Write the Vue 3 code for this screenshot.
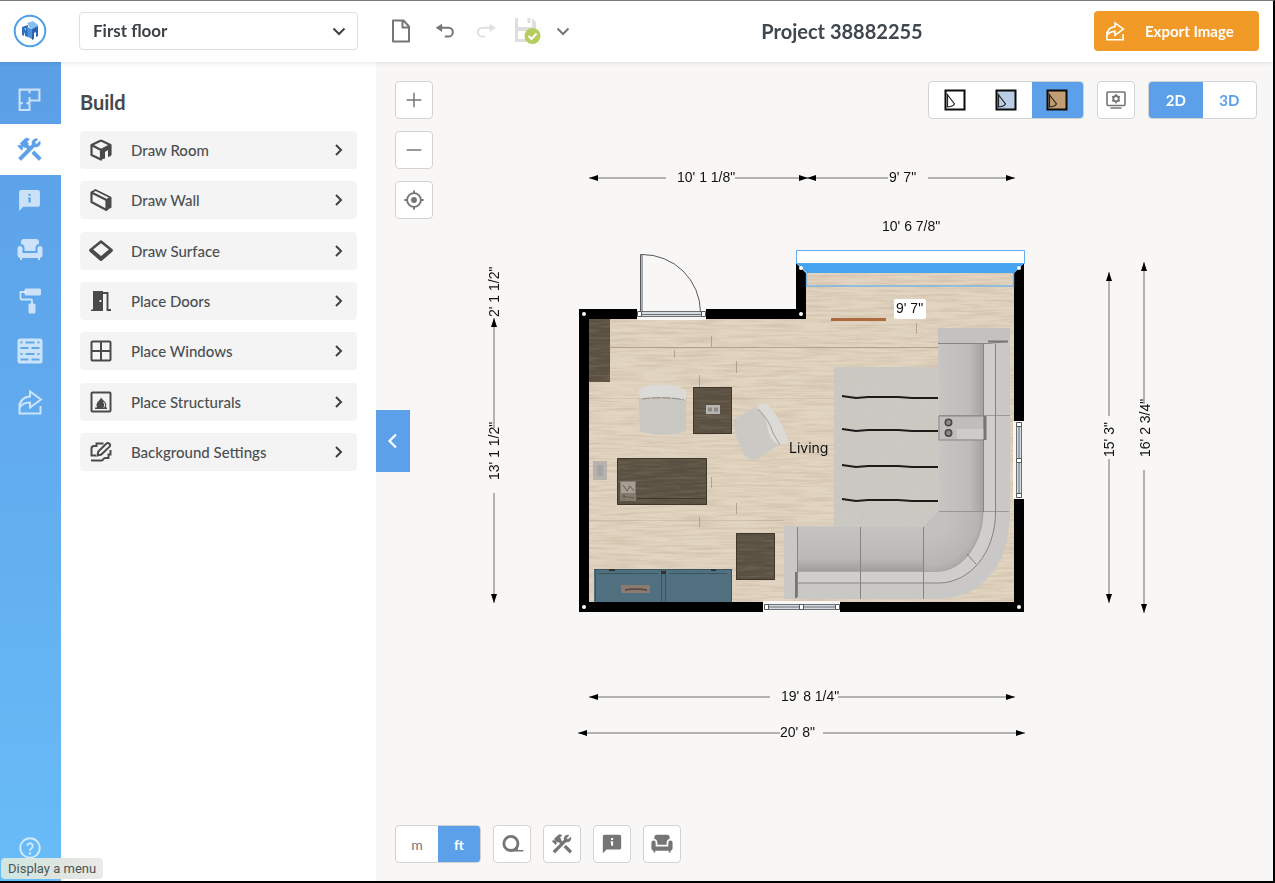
<script setup>
import { ref } from 'vue'

const floor = ref('First floor')
const activeTool = ref('build')
const activeStyle = ref('textured')
const activeView = ref('2D')
const activeUnit = ref('ft')

const rail = [
  { id: 'floorplan', icon: 'plan', label: 'Floor plan' },
  { id: 'build', icon: 'tools', label: 'Build' },
  { id: 'info', icon: 'info', label: 'Info' },
  { id: 'furnish', icon: 'chair', label: 'Furnish' },
  { id: 'decorate', icon: 'roller', label: 'Decorate' },
  { id: 'materials', icon: 'bricks', label: 'Materials' },
  { id: 'share', icon: 'share', label: 'Share' }
]

const buildItems = [
  { icon: 'room', label: 'Draw Room' },
  { icon: 'wall', label: 'Draw Wall' },
  { icon: 'surface', label: 'Draw Surface' },
  { icon: 'door', label: 'Place Doors' },
  { icon: 'window', label: 'Place Windows' },
  { icon: 'fireplace', label: 'Place Structurals' },
  { icon: 'background', label: 'Background Settings' }
]

const zoomTools = [
  { icon: 'plus', label: 'Zoom in' },
  { icon: 'minus', label: 'Zoom out' },
  { icon: 'target', label: 'Center plan' }
]

const planStyles = [
  { id: 'outline', fill: '#ffffff', label: 'Outline' },
  { id: 'tinted', fill: '#b9cde6', label: 'Tinted' },
  { id: 'textured', fill: '#c39d72', label: 'Textured' }
]

const toggles = [
  { icon: 'tape', label: 'Dimensions' },
  { icon: 'tools', label: 'Show structure' },
  { icon: 'info', label: 'Show labels' },
  { icon: 'chair', label: 'Show furniture' }
]

const dimLines = [
  [666, 178, 589, 178],
  [735, 178, 808, 178],
  [888, 178, 807, 178],
  [928, 178, 1015, 178],
  [494, 428, 494, 318],
  [494, 493, 494, 603],
  [1109, 416, 1109, 272],
  [1109, 459, 1109, 603],
  [1144, 404, 1144, 262],
  [1144, 470, 1144, 613],
  [770, 697, 589, 697],
  [838, 697, 1015, 697],
  [780, 733, 578, 733],
  [823, 733, 1025, 733]
]

const dimLabels = [
  { x: 677, y: 182, text: '10\' 1 1/8"' },
  { x: 889, y: 182, text: '9\' 7"' },
  { x: 882, y: 231, text: '10\' 6 7/8"' },
  { x: 781, y: 701, text: '19\' 8 1/4"' },
  { x: 780, y: 737, text: '20\' 8"' },
  { x: 499, y: 317, text: '2\' 1 1/2"', turned: true },
  { x: 499, y: 480, text: '13\' 1 1/2"', turned: true },
  { x: 1114, y: 457, text: '15\' 3"', turned: true },
  { x: 1150, y: 457, text: '16\' 2 3/4"', turned: true }
]

const corners = [[584, 314], [801, 314], [801, 268], [1019, 268], [1019, 607], [584, 607]]
const rugStripes = [397, 430, 466, 500]
</script>

<template>
  <svg class="sprite" aria-hidden="true">
    <symbol id="plan" viewBox="0 0 24 24">
      <path d="M2.500 2.500h19v10.500h-9.500v9H2.500zM12 2.500v3.500M12 9.500v3.500M2.500 15.500h3M9 15.500h3" fill="none" stroke="currentColor" stroke-width="2" />
    </symbol>
    <symbol id="tools" viewBox="0 0 24 24">
      <path d="M13.783 15.172l2.121-2.121 5.996 5.996-2.121 2.121zM17.500 10c1.930 0 3.500-1.570 3.500-3.500 0-.580-.160-1.120-.410-1.600l-2.700 2.700-1.490-1.490 2.700-2.700c-.480-.250-1.020-.410-1.600-.410C15.570 3 14 4.570 14 6.500c0 .410.080.800.210 1.160l-1.850 1.850-1.780-1.780.710-.710-1.410-1.410L12 3.490a3 3 0 0 0-4.240 0L4.220 7.030l1.410 1.410H2.810l-.710.710 3.540 3.540.710-.710V9.150l1.410 1.410.710-.710 1.780 1.780-7.410 7.410 2.120 2.120L16.340 9.790c.360.130.750.210 1.160.210z" fill="currentColor" stroke="currentColor" stroke-width="0.400" />
    </symbol>
    <symbol id="info" viewBox="0 0 24 24">
      <path fill-rule="evenodd" d="M20 2H4c-1.100 0-2 .900-2 2v18l4-4h14c1.100 0 2-.900 2-2V4c0-1.100-.900-2-2-2zM11 5.500h2.200v2H11zM10.500 9h2.700v5h-2.200v-3.500h-.500z" fill="currentColor" />
    </symbol>
    <symbol id="chair" viewBox="0 0 26 26">
      <path d="M7 2h12a3 3 0 0 1 3 3v2c-2 0-3.500 2-3.500 4v3h-11v-3c0-2-1.500-4-3.500-4V5a3 3 0 0 1 3-3zM3 9c1.500 0 2.500 1 2.500 2.500V16h15v-4.500a2.500 2.500 0 0 1 5 0V18a3 3 0 0 1-2.500 3v2h-2v-2H5v2H3v-2a3 3 0 0 1-2.500-3v-6.500A2.500 2.500 0 0 1 3 9z" fill="currentColor" />
    </symbol>
    <symbol id="roller" viewBox="0 0 26 26">
      <path d="M9 4H3.500v6.500a1 1 0 0 0 1 1H14a1 1 0 0 1 1 1V16" fill="none" stroke="currentColor" stroke-width="1.800" />
      <rect x="7.500" y="0.500" width="16.500" height="7" rx="1.500" fill="currentColor" />
      <rect x="11.500" y="15.500" width="7" height="10" rx="1.500" fill="currentColor" />
    </symbol>
    <symbol id="bricks" viewBox="0 0 26 26">
      <rect x="0.500" y="0.500" width="25" height="25" rx="2.500" fill="currentColor" />
      <path d="M3.500 4.500h2M8.500 4.500h9M20.500 4.500h2M3.500 10h8M14.500 10h8M3.500 16h2M8.500 16h9M20.500 16h2M3.500 21.500h8M14.500 21.500h8" stroke="#60a9ec" stroke-width="2" />
    </symbol>
    <symbol id="share" viewBox="0 0 26 26">
      <path d="M13 7.500V2.500l11 8-11 8v-5C8 13.500 4.500 15 2.500 19 2.500 12 6 8 13 7.500zM2.500 14v10.500h21V17" fill="none" stroke="currentColor" stroke-width="2" />
    </symbol>
    <symbol id="help" viewBox="0 0 24 24">
      <circle cx="12" cy="12" r="9" fill="none" stroke="currentColor" stroke-width="1.800" />
      <path d="M9.500 10a2.500 2.500 0 1 1 4 2.200c-1 .700-1.500 1.100-1.500 2.300" fill="none" stroke="currentColor" stroke-width="1.800" />
      <circle cx="12" cy="17" r="1.100" fill="currentColor" />
    </symbol>
    <symbol id="room" viewBox="0 0 24 24">
      <path d="M12 2.500L2.500 7v10l9.500 4.500V12L2.500 7M12 12l9.500-5L12 2.500M21.500 7v10" fill="none" stroke="currentColor" stroke-width="2.200" stroke-linejoin="round" />
      <path d="M12 12l10-5v11l-3 1v-7l-3 2v6.500L12 21.500z" fill="currentColor" />
    </symbol>
    <symbol id="wall" viewBox="0 0 24 24">
      <path d="M2.500 4.500l15 7.500v10L2.500 14z" fill="none" stroke="currentColor" stroke-width="2.200" stroke-linejoin="round" />
      <path d="M2.500 4.500L6.500 2l15 7.500-4 2.500" fill="none" stroke="currentColor" stroke-width="1.800" stroke-linejoin="round" />
      <path d="M17.500 12l5-2.500v10L17.500 22.500z" fill="currentColor" />
    </symbol>
    <symbol id="surface" viewBox="0 0 26 26">
      <path fill-rule="evenodd" d="M12.200 1.500q.800-.500 1.600 0L25.500 11q.800 1 0 2.500L14 23.500q-1 .800-2 0L.500 13.500q-.800-1.500 0-2.500zM13 4.500L4.500 11.500 13 18.500l8.500-7z" fill="currentColor" />
    </symbol>
    <symbol id="door" viewBox="0 0 24 24">
      <path fill-rule="evenodd" d="M4 2h10v20H2v-1.500h2zM10.500 11v2h1.800v-2z" fill="currentColor" />
      <path d="M14 4h4.500v17H22" fill="none" stroke="currentColor" stroke-width="1.900" />
    </symbol>
    <symbol id="window" viewBox="0 0 24 24">
      <path d="M3.500 2.500h17a1 1 0 0 1 1 1v17a1 1 0 0 1-1 1h-17a1 1 0 0 1-1-1v-17a1 1 0 0 1 1-1zM12 2.500v19M2.500 12h19" fill="none" stroke="currentColor" stroke-width="2" />
    </symbol>
    <symbol id="fireplace" viewBox="0 0 24 24">
      <rect x="2.500" y="2.500" width="19" height="19" rx="1" fill="none" stroke="currentColor" stroke-width="2" />
      <path d="M6 19h12v-1.500h-1c1-4-1-6-2.500-7L12 7.500c-.500 2.500-4.500 4-4.500 8l.500 2H6z" fill="currentColor" />
      <path d="M14.500 12c1.500 2 1.500 4 .300 5.500" fill="none" stroke="#f3f3f3" stroke-width="1" />
    </symbol>
    <symbol id="background" viewBox="0 0 24 24">
      <path d="M14.500 3.500H7.500v2.500H5a2.500 2.500 0 0 0-2.500 2.500V15.500H7M2 20.500h11c1 0 1.500-2.500 3-2.500h3.500v-3.500H21.500V10" fill="none" stroke="currentColor" stroke-width="2" />
      <path d="M8.500 15.500l.800-4 8.200-8a1.800 1.800 0 0 1 2.600 0l.500.500a1.800 1.800 0 0 1 0 2.600L12.300 14.500z" fill="none" stroke="currentColor" stroke-width="2" />
    </symbol>
    <symbol id="right" viewBox="0 0 16 16">
      <path d="M5 3l5 5-5 5" fill="none" stroke="currentColor" stroke-width="2" />
    </symbol>
    <symbol id="down" viewBox="0 0 16 16">
      <path d="M2.500 5.500L8 11l5.500-5.500" fill="none" stroke="currentColor" stroke-width="2" />
    </symbol>
    <symbol id="file" viewBox="0 0 24 24">
      <path d="M4 1.500h10.500l5.500 6v15H4zM13.500 2v6.500H20" fill="none" stroke="currentColor" stroke-width="2" stroke-linejoin="round" />
    </symbol>
    <symbol id="undo" viewBox="0 0 24 24">
      <path d="M9 8.500h9a4.700 4.700 0 0 1 0 9.500h-4" fill="none" stroke="currentColor" stroke-width="2.200" />
      <path d="M4 8.500L11 4v9z" fill="currentColor" />
    </symbol>
    <symbol id="redo" viewBox="0 0 24 24">
      <path d="M18 8.500H9A4.700 4.700 0 0 0 9 18h3" fill="none" stroke="currentColor" stroke-width="2.200" />
      <path d="M24 8.500L17 4v9z" fill="currentColor" />
    </symbol>
    <symbol id="saved" viewBox="0 0 28 28">
      <path fill-rule="evenodd" d="M2 1h3v9h14V1l4 4v20H2zM5 14v8h16v-8zM14.500 1h3v5h-3z" fill="#dedede" />
      <circle cx="19.500" cy="19" r="8" fill="#b5cc5e" />
      <path d="M15.500 19l3 3 5-5.500" fill="none" stroke="#fff" stroke-width="2" />
    </symbol>
    <symbol id="plus" viewBox="0 0 24 24">
      <path d="M12 4v16M4 12h16" stroke="currentColor" stroke-width="1.600" />
    </symbol>
    <symbol id="minus" viewBox="0 0 24 24">
      <path d="M4 12h16" stroke="currentColor" stroke-width="1.600" />
    </symbol>
    <symbol id="target" viewBox="0 0 24 24">
      <circle cx="12" cy="12" r="7.500" fill="none" stroke="currentColor" stroke-width="2" />
      <circle cx="12" cy="12" r="3.200" fill="currentColor" />
      <path d="M12 1.500v4M12 18.500v4M1.500 12h4M18.500 12h4" stroke="currentColor" stroke-width="2" />
    </symbol>
    <symbol id="display" viewBox="0 0 24 24">
      <rect x="3" y="4" width="18" height="13.500" rx="1" fill="none" stroke="currentColor" stroke-width="1.600" />
      <circle cx="12" cy="10.700" r="2.700" fill="none" stroke="currentColor" stroke-width="1.900" />
      <path d="M12 6v2M12 13.500v2M8 8.300l1.700 1M14.300 12l1.700 1.100M8 13.100l1.700-1.100M14.300 9.300l1.700-1M6.500 20h11" stroke="currentColor" stroke-width="1.500" />
    </symbol>
    <symbol id="tape" viewBox="0 0 24 24">
      <circle cx="11" cy="11.500" r="6.500" fill="none" stroke="currentColor" stroke-width="2.600" />
      <path d="M11 17h5l1.500-4v4.500h5v1.500H11z" fill="currentColor" />
    </symbol>
  </svg>

  <div class="app">
    <header class="topbar">
      <a class="logo" href="#" aria-label="Home">
        <svg viewBox="0 0 34 34">
          <circle cx="17" cy="17" r="15.300" fill="#fff" stroke="#4fa0e6" stroke-width="2" />
          <path d="M9 13l6-2v12l-3-1v-4l-1.500 4L9 21z" fill="#2f6fc0" />
          <path d="M14 9l6-2 5 4-1 5-7-2z" fill="#86bff0" />
          <path d="M14 13l5 2v10l-4-2z" fill="#4b93dd" />
          <path d="M19 15l6-3v10l-2 1v-5l-2 1v6l-2 1z" fill="#2866b4" />
          <path d="M11 14.500l2-.500v3z" fill="#8fc4f2" />
        </svg>
      </a>
      <label class="floor-picker">
        <select v-model="floor" aria-label="Floor">
          <option>First floor</option>
        </select>
        <svg><use href="#down" /></svg>
      </label>
      <nav class="file-tools">
        <button class="plain" aria-label="New"><svg class="s24"><use href="#file" /></svg></button>
        <button class="plain" aria-label="Undo"><svg class="s22"><use href="#undo" /></svg></button>
        <button class="plain faded" aria-label="Redo"><svg class="s22"><use href="#redo" /></svg></button>
        <button class="plain" aria-label="Saved"><svg class="s28"><use href="#saved" /></svg></button>
        <button class="plain small" aria-label="Save options"><svg class="s16"><use href="#down" /></svg></button>
      </nav>
      <h1>Project 38882255</h1>
      <button class="export"><svg><use href="#share" /></svg>Export Image</button>
    </header>

    <div class="workspace">
      <nav class="rail">
        <div class="rail-items">
          <button v-for="r in rail" :key="r.id" :class="{ active: activeTool === r.id }" :aria-label="r.label" @click="activeTool = r.id">
            <svg :class="r.icon"><use :href="'#' + r.icon" /></svg>
          </button>
        </div>
        <button class="help" aria-label="Help"><svg><use href="#help" /></svg></button>
      </nav>

      <aside class="panel">
        <h2>Build</h2>
        <div class="menu">
          <button v-for="b in buildItems" :key="b.label">
            <svg class="lead"><use :href="'#' + b.icon" /></svg>
            <span>{{ b.label }}</span>
            <svg class="go"><use href="#right" /></svg>
          </button>
        </div>
      </aside>

      <main class="canvas">
        <svg class="drawing" viewBox="376 62 897 819" role="img" aria-label="Floor plan">
          <defs>
            <marker id="arrow" viewBox="0 0 10 6" refX="9" refY="3" markerWidth="10" markerHeight="6" markerUnits="userSpaceOnUse" orient="auto">
              <path d="M0 0l9 3-9 3z" fill="#000" />
            </marker>
            <filter id="grain" x="0" y="0" width="1" height="1">
              <feTurbulence type="fractalNoise" baseFrequency="0.025 0.400" numOctaves="3" seed="4" />
              <feColorMatrix values="0 0 0 0 0.620  0 0 0 0 0.520  0 0 0 0 0.400  1.800 0 0 0 -0.680" />
              <feComposite in2="SourceGraphic" operator="in" />
            </filter>
            <filter id="dark-grain" x="0" y="0" width="1" height="1">
              <feTurbulence type="fractalNoise" baseFrequency="0.030 0.400" numOctaves="3" seed="9" />
              <feColorMatrix values="0 0 0 0 0.180  0 0 0 0 0.150  0 0 0 0 0.100  1.500 0 0 0 -0.620" />
              <feComposite in2="SourceGraphic" operator="in" />
            </filter>
            <filter id="rug-grain" x="0" y="0" width="1" height="1">
              <feTurbulence type="fractalNoise" baseFrequency="0.400" numOctaves="2" seed="2" />
              <feColorMatrix values="0 0 0 0 0.550  0 0 0 0 0.540  0 0 0 0 0.520  1.200 0 0 0 -0.500" />
              <feComposite in2="SourceGraphic" operator="in" />
            </filter>
            <linearGradient id="seat-v" x1="0" x2="1" y1="0" y2="0">
              <stop offset="0" stop-color="#c6c5c2" /><stop offset=".7" stop-color="#bdbcba" /><stop offset="1" stop-color="#a3a2a0" />
            </linearGradient>
            <linearGradient id="seat-h" x1="0" x2="0" y1="0" y2="1">
              <stop offset="0" stop-color="#c4c3c0" /><stop offset=".7" stop-color="#bbbab8" /><stop offset="1" stop-color="#a09f9d" />
            </linearGradient>
            <radialGradient id="seat-corner" cx="0.1" cy="0.1" r="1">
              <stop offset=".3" stop-color="#c2c1bf" /><stop offset=".8" stop-color="#b7b6b4" /><stop offset="1" stop-color="#a3a2a0" />
            </radialGradient>
          </defs>

          <path d="M589 319H806V272H1014V602H589z" fill="#e1d4c0" />
          <path d="M589 319H806V272H1014V602H589z" fill="#fff" filter="url(#grain)" />
          <g stroke="#8f7f6b" stroke-width="1" opacity=".55">
            <path d="M610 347.500H938" />
            <path d="M589 398.500H834M589 520.500H784" opacity=".3" />
            <path d="M711.500 336v11M736.500 361v12M699.500 375v12M916.500 323v11M711.500 477v11M736.500 503v11M699.500 517v10M674.500 350v8" />
          </g>

          <rect x="834" y="367" width="110" height="160" fill="#cbc9c2" />
          <rect x="834" y="367" width="110" height="160" fill="#fff" filter="url(#rug-grain)" />
          <path v-for="y in rugStripes" :key="y" :d="`M842 ${y - 1}l14 2 12-1 18 0 12 0 14 1 12 0 14 0`" fill="none" stroke="#1d1b1a" stroke-width="2" />

          <path d="M938 328H1010V512C1010 565 982 599 936 599H784V526H918L938 509z" fill="#c9c8c6" />
          <path d="M938 328h72v13h-20l-20 2h-32z" fill="#c3c2c0" />
          <path d="M939 343.500h44v72h-44z" fill="url(#seat-v)" />
          <path d="M939 440h44v71h-44z" fill="url(#seat-v)" />
          <path d="M939 511h44c0 30-18 60-44 60h-16v-44l16-16z" fill="url(#seat-corner)" />
          <path d="M798 527h62v44h-62zM860 527h63v44h-63z" fill="url(#seat-h)" />
          <path d="M797 571h140c26 0 46-28 46-60V343h12v168c0 42-26 72-56 72H797z" fill="#cfcecc" />
          <g fill="none" stroke="#858482" stroke-width="1">
            <path d="M938 343.500h50l20-2M983.500 344v168M995.500 344v168c0 40-25 71-57 71H797" />
            <path d="M939 415.500h71M939 511.500h70" opacity=".7" />
            <path d="M860.500 527v44M923.500 527v72M967 554l9 10M797.500 527v70M860.500 571v28" />
            <path d="M797 571.500h140c26 0 46-30 46-60" opacity=".5" />
          </g>
          <path d="M796 572v26M988 341.500h20" stroke="#777674" stroke-width="2" />
          <path d="M939 416h45v24h-45z" fill="#bfbebc" stroke="#858482" />
          <path d="M957 429h27v10h-27z" fill="#cdccca" />
          <path d="M985 416v24" stroke="#777674" stroke-width="3" />
          <circle cx="948.500" cy="422.500" r="3.200" fill="#8a8988" stroke="#454443" stroke-width="1.500" />
          <circle cx="948.500" cy="433" r="3.200" fill="#8a8988" stroke="#454443" stroke-width="1.500" />

          <path d="M831 319.500h55" stroke="#ab6a3f" stroke-width="3" />

          <g fill="#5a5042">
            <path d="M589 319h21v63h-21zM693 387h39v47h-39zM617 458h90v47h-90zM736 533h39v47h-39z" />
            <path d="M589 319h21v63h-21zM693 387h39v47h-39zM617 458h90v47h-90zM736 533h39v47h-39z" filter="url(#dark-grain)" />
          </g>
          <g fill="none" stroke="#40372c">
            <path d="M693.500 387.500h38v46h-38zM617.500 458.500h89v46h-89zM736.500 533.500h38v46h-38zM637 498.500h68" />
          </g>
          <path d="M706 405h14v9h-14z" fill="#b8b6b3" />
          <path d="M708 407.500h4v4h-4zM714 407.500h4v4h-4z" fill="#8b8987" />
          <path d="M620 481h16v20h-16z" fill="#857a6e" />
          <path d="M621 482h14v11h-14z" fill="#a79e93" />
          <path d="M623 485l4 6 3-5 4 5M622 496l12 2M624 494v6" fill="none" stroke="#655b50" />
          <path d="M593 461h14v19h-14z" fill="#b7b3ac" />
          <path d="M597 465h6v11h-6z" fill="#a3a5a6" />

          <path d="M639 399h47q1 2 0 4v28c-14 5-32 5-46 0z" fill="#c9c7c2" />
          <path d="M639 389c14-6 34-6 47 1q1 5-1 10c-12-3-30-3-43-1q-4-4-3-10z" fill="#dcdad6" />
          <path d="M642 399c12-2 30-2 42 1" fill="none" stroke="#8e8a84" stroke-dasharray="9 1" />
          <path d="M733 420l22-13 15 10 8 28-20 14q-8 2-14-4-8-14-11-35z" fill="#cbc9c4" />
          <path d="M757 406q7-6 13 1 12 14 18 33-3 7-9 5-10-4-12-20-2-10-10-19z" fill="#dcdad6" />
          <path d="M758 409q12 12 15 24l7 12" fill="none" stroke="#a19d97" />

          <path d="M594 569h138v33H594z" fill="#51707f" />
          <path d="M595.500 570v31M661.500 570v32M665.500 570v32M731.500 570v32M594 569.500h138M598 573.500h60M669 573.500h58" stroke="#3b5461" />
          <path d="M621 585h29v8h-29z" fill="#8c7a70" />
          <path d="M625 590q10-2 22 0" stroke="#4f4741" fill="none" stroke-width="1.500" />
          <path d="M609 569h6v2h-6zM661 571h5v3h-5zM711 569h5v2h-5z" fill="#35302b" />

          <path d="M579 309h227v10H589v283h425V319h10v293H579z" fill="#000" />
          <path d="M796 263l10 10v46h-10zM1024 263l-10 10v60h10z" fill="#000" />
          <path d="M796.500 250.500h228v13h-228z" fill="#fff" stroke="#63aeef" />
          <path d="M797 263.500h227l-10 9.500H807z" fill="#45a3ef" />
          <path d="M806.500 273v13h207v-13" fill="none" stroke="#63aeef" stroke-width="1.500" opacity=".8" />

          <path d="M637 308h69v12h-69zM763 601h77v12h-77zM1013 421h12v78h-12z" fill="#f8f7f6" />
          <g fill="#d6dbe2" stroke="#6c6f73">
            <path d="M641.500 311.500h60v5h-60zM768.500 604.500h67v5h-67zM1016.500 426.500h5v67h-5z" />
            <path d="M642 314.500h59M768 607h67M1019 427v67" fill="none" />
          </g>
          <g fill="#fff" stroke="#55585c">
            <path d="M637.500 311.500h4v5h-4zM701.500 311.500h4v5h-4zM764.500 604.500h4v5h-4zM835.500 604.500h4v5h-4zM799.500 604.500h4v5h-4zM1016.500 422.500h5v4h-5zM1016.500 493.500h5v4h-5zM1016.500 458.500h5v4h-5z" />
            <path d="M640.500 254.500h1.500v57h-1.500z" />
            <path d="M642 254.500A58 58 0 0 1 700.500 312" fill="none" />
          </g>
          <circle v-for="c in corners" :key="c.join()" :cx="c[0]" :cy="c[1]" r="2" fill="#fff" />

          <path v-for="(l, i) in dimLines" :key="i" :d="`M${l[0]} ${l[1]}L${l[2]} ${l[3]}`" class="dim" marker-end="url(#arrow)" />
          <text v-for="t in dimLabels" :key="t.text + t.x" :x="t.x" :y="t.y" :transform="t.turned ? `rotate(-90 ${t.x} ${t.y})` : null">{{ t.text }}</text>
          <rect x="894" y="299" width="32" height="20" rx="2" fill="#fff" />
          <text x="896" y="313">9' 7"</text>
          <text x="789" y="453" class="room-name">Living</text>
        </svg>

        <div class="controls top">
          <div class="zoom">
            <button v-for="z in zoomTools" :key="z.label" class="tile" :aria-label="z.label"><svg class="s22"><use :href="'#' + z.icon" /></svg></button>
          </div>
          <div class="modes">
            <div class="group styles">
              <button v-for="s in planStyles" :key="s.id" :class="{ active: activeStyle === s.id }" :aria-label="s.label" @click="activeStyle = s.id">
                <svg viewBox="0 0 22 22" class="s22">
                  <rect x="1.500" y="1.500" width="19" height="19" :fill="s.fill" stroke="#0b0b0b" stroke-width="2" />
                  <path d="M2.500 4.500l8 10.500q-2 3-8 3M3.500 5v13" fill="none" stroke="#222" stroke-width="1.200" />
                </svg>
              </button>
            </div>
            <button class="tile" aria-label="Display settings"><svg class="s24"><use href="#display" /></svg></button>
            <div class="group views">
              <button v-for="v in ['2D', '3D']" :key="v" :class="{ active: activeView === v }" @click="activeView = v">{{ v }}</button>
            </div>
          </div>
        </div>

        <button class="collapse" aria-label="Collapse panel">
          <svg viewBox="0 0 16 16"><path d="M11 1.500L4.500 8l6.500 6.500" fill="none" stroke="#fff" stroke-width="2.200" /></svg>
        </button>

        <div class="controls bottom">
          <div class="group units">
            <button v-for="u in ['m', 'ft']" :key="u" :class="{ active: activeUnit === u }" @click="activeUnit = u">{{ u }}</button>
          </div>
          <button v-for="t in toggles" :key="t.label" class="tile" :aria-label="t.label"><svg :class="t.icon"><use :href="'#' + t.icon" /></svg></button>
        </div>
      </main>
    </div>
    <div class="tip" role="tooltip">Display a menu</div>
  </div>
</template>

<style>
html, body { background: #000; }
</style>

<style scoped>
.app {
  position: relative;
  box-sizing: border-box;
  height: 100vh;
  min-height: 640px;
  display: flex;
  flex-direction: column;
  border: solid #000;
  border-width: 1px 2px 2px 0;
  border-top-color: #7d7d7d;
  font-family: Lato, "Open Sans", sans-serif;
  color: #45494d;
  background: #fff;
}
.sprite { position: absolute; width: 0; height: 0; }
button { font: inherit; color: inherit; border: 0; padding: 0; background: none; cursor: pointer; display: flex; align-items: center; justify-content: center; }
svg { display: block; flex: none; }
.s16 { width: 16px; height: 16px; }
.s22 { width: 22px; height: 22px; }
.s24 { width: 24px; height: 24px; }
.s28 { width: 28px; height: 28px; }

.topbar { position: relative; z-index: 2; box-sizing: border-box; height: 61px; flex: none; display: flex; align-items: center; padding: 0 14px 2px 0; background: #fff; box-shadow: 0 1px 4px rgba(0, 0, 0, .1); }
.logo { width: 79px; flex: none; }
.logo svg { width: 34px; height: 34px; margin-left: 13px; }
.floor-picker { position: relative; width: 279px; }
.floor-picker select { box-sizing: border-box; width: 100%; height: 38px; padding: 0 13px; appearance: none; border: 1px solid #dfdfdf; border-radius: 4px; background: #fff; font: bold 17px Lato, sans-serif; color: #3d4246; }
.floor-picker svg { position: absolute; right: 11px; top: 11px; width: 16px; height: 16px; color: #3d4246; pointer-events: none; }
.file-tools { display: flex; align-items: center; margin-left: 22px; width: 210px; color: #767676; }
.plain { width: 42px; height: 40px; }
.plain.small { width: 30px; }
.plain.faded { color: #e0e0e0; }
h1 { flex: 1; margin: 0; text-align: center; font-size: 20px; line-height: 24px; white-space: nowrap; color: #3f474f; }
.export { width: 165px; height: 40px; justify-content: flex-start; gap: 20px; padding-left: 11px; border-radius: 4px; background: #f29a27; color: #fff; font-weight: bold; font-size: 15px; }
.export svg { width: 20px; height: 20px; }

.workspace { flex: 1; min-height: 0; display: flex; }
.rail { width: 61px; flex: none; display: flex; flex-direction: column; justify-content: space-between; padding: 12px 0 20px; box-sizing: border-box; background: linear-gradient(#5b9fe7, #61abee 45%, #68bcf7); color: rgba(255, 255, 255, .68); }
.rail-items { display: grid; grid-auto-rows: 1fr; height: 353px; }
.rail-items svg { width: 26px; height: 26px; }
.rail-items .plan, .rail-items .info { width: 25px; height: 25px; }
.rail-items .tools { width: 29px; height: 29px; }
.rail button { width: 59px; padding-right: 2px; box-sizing: content-box; }
.rail .active { background: #fff; color: #5ba0e8; }
.help svg { width: 26px; height: 26px; }

.panel { width: 315px; flex: none; box-sizing: border-box; padding: 28px 19px 0; background: #fff; }
h2 { margin: 0 0 17px; font-size: 20px; line-height: 24px; color: #45494d; }
.menu { display: flex; flex-direction: column; justify-content: space-between; height: 340px; }
.menu button { height: 38px; padding: 0 10px 0 9px; border-radius: 4px; background: #f4f4f4; font-size: 15px; color: #4b4f52; }
.menu span { flex: 1; text-align: left; margin-left: 18px; font-weight: 500; }
.lead { width: 24px; height: 24px; color: #4a4a48; }
.go { width: 16px; height: 16px; color: #3f4245; }

.canvas { position: relative; flex: 1; min-width: 0; background: #f8f7f6; display: flex; flex-direction: column; justify-content: space-between; }
.drawing { position: absolute; inset: 0; width: 100%; height: 100%; }
.drawing text { font: 14px "Liberation Sans", Arial, sans-serif; fill: #111; }
.drawing .room-name { font: 14px Inter, sans-serif; }
.dim { fill: none; stroke: #6f6f6f; stroke-width: 1px; }
.controls { position: relative; display: flex; align-items: flex-start; }
.top { padding: 19px 16px 0 19px; justify-content: space-between; }
.bottom { padding: 0 19px 18px; gap: 12px; }
.zoom { display: flex; flex-direction: column; gap: 12px; }
.modes { display: flex; gap: 13px; }
.tile { box-sizing: border-box; width: 38px; height: 38px; border: 1px solid #d3d3d3; border-radius: 4px; background: #fff; color: #757575; }
.tile .tools { width: 24px; height: 24px; }
.tile .tape { width: 26px; height: 26px; }
.tile .info, .tile .chair { width: 22px; height: 22px; }
.group { box-sizing: border-box; height: 38px; display: flex; border: 1px solid #d3d3d3; border-radius: 4px; background: #fff; overflow: hidden; }
.group button { flex: 1; }
.styles { width: 156px; }
.views { width: 109px; font-size: 15px; font-weight: bold; color: #5ba0e8; }
.units { width: 86px; font-size: 14px; color: #777; }
.group .active { background: #5ba0e8; color: #fff; }
.units .active { font-weight: bold; }
.collapse { position: absolute; left: 0; top: 348px; width: 34px; height: 62px; background: #5ba0e8; }
.collapse svg { width: 16px; height: 16px; }

.tip { position: absolute; z-index: 3; left: 1px; bottom: 2px; padding: 0 7px; height: 21px; line-height: 21px; border-radius: 4px; background: linear-gradient(90deg, #cfe6e0, #dfe5e1 60%, #ebebe9); font-family: Roboto, sans-serif; font-size: 13px; color: #4c5554; }
</style>
